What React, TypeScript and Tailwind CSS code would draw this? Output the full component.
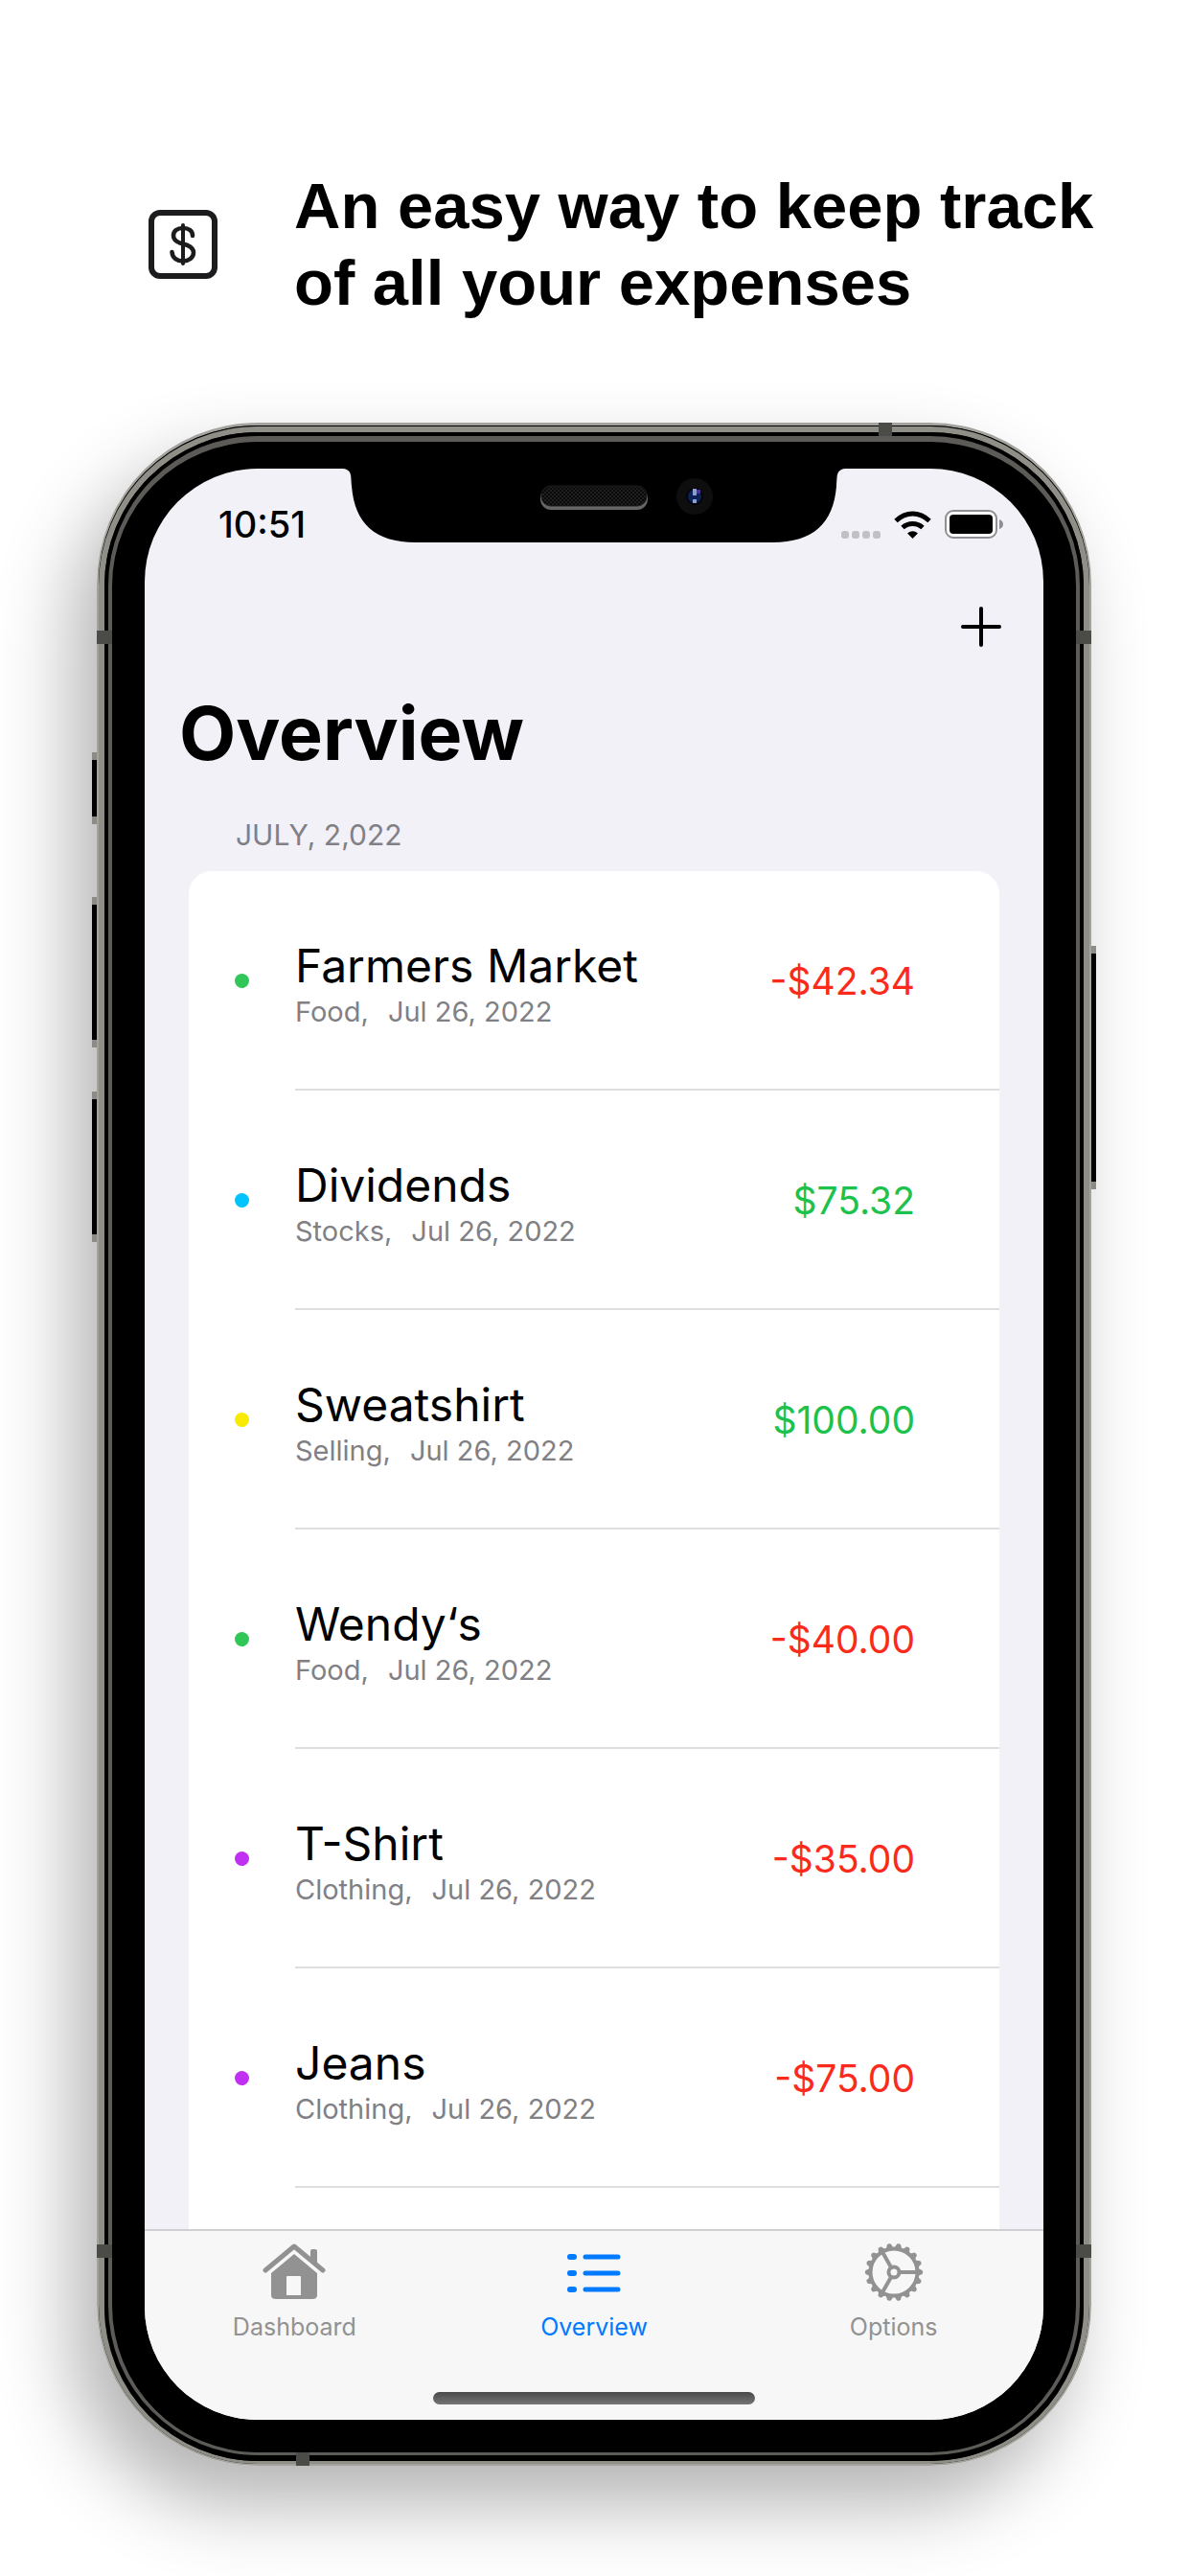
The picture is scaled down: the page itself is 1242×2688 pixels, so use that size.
import type { ReactNode } from 'react';

const transactions = [
  { title: 'Farmers Market', category: 'Food', amount: '-$42.34', dot: 'bg-[#30c758]' },
  { title: 'Dividends', category: 'Stocks', amount: '$75.32', dot: 'bg-[#00c4fb]' },
  { title: 'Sweatshirt', category: 'Selling', amount: '$100.00', dot: 'bg-[#f8ea00]' },
  { title: 'Wendy‘s', category: 'Food', amount: '-$40.00', dot: 'bg-[#30c758]' },
  { title: 'T-Shirt', category: 'Clothing', amount: '-$35.00', dot: 'bg-[#bf30f2]' },
  { title: 'Jeans', category: 'Clothing', amount: '-$75.00', dot: 'bg-[#bf30f2]' },
];

const gearAngles = Array.from({ length: 18 }, (_, i) => i * 20);

function DollarLogo() {
  return (
    <svg viewBox="0 0 72 72" className="size-[72px] shrink-0" fill="none" stroke="#1c1c1e" aria-hidden="true">
      <rect x="3" y="3" width="66" height="66" rx="9" strokeWidth="6" />
      <path d="M46 27c0-5-4-8-10-8s-10 3-10 8 4 7 10 8.500 11 3.500 11 9-5 9-11 9-11-3-11.500-9.500" strokeWidth="4.500" strokeLinecap="round" />
      <path d="M36 16v40" strokeWidth="4" strokeLinecap="round" />
    </svg>
  );
}

function HouseIcon() {
  return (
    <svg viewBox="0 0 66 60" className="h-[60px] w-[66px]" aria-hidden="true">
      <path d="M3 28 33 3 63 28" fill="none" stroke="#929292" strokeWidth="5" strokeLinecap="round" strokeLinejoin="round" />
      <path d="M50 16V8q0-2 2-2h3q2 0 2 2v14z" fill="#929292" />
      <path fillRule="evenodd" fill="#929292" d="M33 11 57 31v23q0 4-5 4H14q-5 0-5-4V31zM26 34q-1 0-1 1v19h15V35q0-1-1-1z" />
    </svg>
  );
}

function ListIcon() {
  return (
    <svg viewBox="0 0 56 60" className="h-[60px] w-14" fill="none" stroke="#007aff" strokeLinecap="round" aria-hidden="true">
      <path d="M3 14h4M3 31h4M3 48h4" strokeWidth="6" />
      <path d="M19 14h34M19 31h34M19 48h34" strokeWidth="5" />
    </svg>
  );
}

function GearIcon() {
  return (
    <svg viewBox="-31 -31 62 62" className="h-[62px] w-[62px]" aria-hidden="true">
      <g fill="none" stroke="#929292">
        <circle r="24.500" strokeWidth="4" />
        <circle r="5.500" strokeWidth="4" />
        <path d="M7 0H24M-3.500 6-12 21M-3.500-6-12-21" strokeWidth="4" />
      </g>
      {gearAngles.map((angle) => (
        <path key={angle} d="M25-4 29.500-2Q31 0 29.500 2L25 4z" fill="#929292" transform={`rotate(${angle})`} />
      ))}
    </svg>
  );
}

function WifiIcon() {
  return (
    <svg viewBox="0 0 39 29" className="h-[29px] w-[39px]" aria-hidden="true">
      <g fill="none" stroke="#000" strokeWidth="5">
        <path d="M2 10.500Q10 3 19.500 3T37 10.500" />
        <path d="M9 17.500Q13.500 13.500 19.500 13.500T30 17.500" />
      </g>
      <path d="M14 23.500Q19.500 19 25 23.500L19.500 29z" />
    </svg>
  );
}

function BatteryIcon() {
  return (
    <svg viewBox="0 0 61 30" className="h-[30px] w-[61px]" aria-hidden="true">
      <rect x="1" y="1" width="53" height="28" rx="8" fill="#fff" stroke="#8e8e93" strokeWidth="2" />
      <rect x="5" y="5" width="45" height="20" rx="4" />
      <path d="M57 10q4 1.500 4 5t-4 5z" fill="#8e8e93" />
    </svg>
  );
}

function Notch() {
  return (
    <div className="absolute inset-x-0 top-0 flex justify-center">
      <svg viewBox="0 0 528 78" className="h-[78px] w-[528px]" aria-hidden="true">
        <defs>
          <pattern id="mesh" width="4" height="4" patternUnits="userSpaceOnUse">
            <path d="M0 0h2v2H0zM2 2h2v2H2z" fill="#202020" />
          </pattern>
        </defs>
        <path d="M0 0H528C516 0 518 8 517 18 514 56 494 77 450 77H78C34 77 14 56 11 18 10 8 12 0 0 0z" />
        <rect x="208" y="20" width="112" height="23" rx="11" fill="#666" />
        <rect x="209" y="18" width="110" height="21" rx="10" fill="#090909" stroke="#222" />
        <rect x="210" y="19" width="108" height="19" rx="9" fill="url(#mesh)" />
        <circle cx="369" cy="29" r="19" fill="#0e0e0f" />
        <circle cx="369" cy="29" r="9" fill="#03040c" />
        <circle cx="369" cy="29" r="7" fill="#0c2155" />
        <path d="M369 22h6v4h-6z" fill="#4b2f9c" />
        <path d="M367 21h4v7h-4zM367 32h4v4h-4z" fill="#8a9fd0" />
      </svg>
    </div>
  );
}

function SideButton({ place }: { place: string }) {
  return <div className={`absolute w-[5px] border-y-8 border-[#8c8b86] bg-black ${place}`} />;
}

function Band({ place }: { place: string }) {
  return <div className={`absolute bg-[#4b4b48] ${place}`} />;
}

function Tab({ label, active, children }: { label: string; active?: boolean; children: ReactNode }) {
  return (
    <button
      type="button"
      className={`flex flex-1 flex-col items-center text-[25px] leading-[32px] ${active ? 'text-[#007aff]' : 'text-[#929292]'}`}
    >
      <span className="flex h-[64px] items-center">{children}</span>
      <span className="mt-[9px]">{label}</span>
    </button>
  );
}

export default function App() {
  return (
    <main className="overflow-hidden bg-white pb-[115px] font-['Inter',sans-serif] text-black">
      <header className="flex items-center gap-20 pt-[175px] pl-[155px]">
        <DollarLogo />
        <h1 className="font-['Liberation_Sans',Arial,sans-serif] text-[67px] leading-[80px] font-bold">
          An easy way to keep track
          <br />
          of all your expenses
        </h1>
      </header>

      <section className="relative mt-[106px] mr-[103px] ml-[101px] rounded-[168px] shadow-[-24px_40px_80px_rgba(0,0,0,0.3)]">
        <SideButton place="top-[344px] -left-[5px] h-[75px]" />
        <SideButton place="top-[495px] -left-[5px] h-[157px]" />
        <SideButton place="top-[698px] -left-[5px] h-[157px]" />
        <SideButton place="top-[546px] -right-[5px] h-[254px]" />

        <div className="rounded-[168px] border-x-2 border-t-3 border-b-2 border-[#a3a29d] bg-black">
          <div className="rounded-[166px] border-t border-black">
            <div className="rounded-[166px] border-x-6 border-t-6 border-b-3 border-[#8f8e87] bg-black">
              <div className="rounded-[160px] border-x-4 border-t-4 border-b-6 border-black">
                <div className="rounded-[156px] border-x-4 border-t-6 border-b-3 border-[#5c5b57] bg-black px-[34px] pt-7 pb-[34px]">
                  <div className="relative flex flex-col overflow-hidden rounded-[118px] bg-[#f2f1f7]">
                    <Notch />
                    <div className="flex h-[92px] items-end justify-between pr-[42px] pl-[77px]">
                      <span className="text-[38px] leading-[68px] font-medium">10:51</span>
                      <span className="flex items-center gap-[14px] pb-[19px]">
                        <span className="flex gap-[3px] pt-[21px]">
                          <i className="size-2 rounded-[3px] bg-[#c1c0c5]" />
                          <i className="size-2 rounded-[3px] bg-[#c1c0c5]" />
                          <i className="size-2 rounded-[3px] bg-[#c1c0c5]" />
                          <i className="size-2 rounded-[3px] bg-[#c1c0c5]" />
                        </span>
                        <WifiIcon />
                        <BatteryIcon />
                      </span>
                    </div>

                    <div className="flex justify-end pt-[52px] pr-[44px]">
                      <button type="button" aria-label="Add transaction">
                        <svg viewBox="0 0 42 42" className="size-[42px]" stroke="#000" strokeWidth="4" strokeLinecap="round" aria-hidden="true">
                          <path d="M21 2v38M2 21h38" />
                        </svg>
                      </button>
                    </div>

                    <h2 className="pt-[40px] pl-[36px] text-[77px] leading-[100px] font-bold">Overview</h2>
                    <h3 className="pt-[36px] pl-[95px] text-[30px] leading-[40px] text-[#808085]">JULY, 2,022</h3>

                    <ul className="mx-[46px] mt-[18px] h-[1417px] overflow-hidden rounded-t-3xl bg-white">
                      {transactions.map((t) => (
                        <li key={t.title} className="flex h-[229px] pl-12">
                          <span className={`mt-[107px] size-[15px] shrink-0 rounded-full ${t.dot}`} />
                          <div className="ml-12 flex flex-1 items-center justify-between border-b-2 border-[#dedee0] pt-[2px] pr-[88px]">
                            <div className="pt-1">
                              <div className="text-[48px] leading-[60px]">{t.title}</div>
                              <div className="flex gap-5 text-[29px] leading-[36px] text-[#808085]">
                                <span>{t.category},</span>
                                <span>Jul 26, 2022</span>
                              </div>
                            </div>
                            <div className={`text-[39px] leading-[48px] ${t.amount.startsWith('-') ? 'text-[#fb2a1c]' : 'text-[#1cc24b]'}`}>
                              {t.amount}
                            </div>
                          </div>
                        </li>
                      ))}
                    </ul>

                    <nav className="border-t-2 border-[#d0d0d2] bg-[#f7f7f7] pt-[11px] pb-4">
                      <div className="flex">
                        <Tab label="Dashboard">
                          <HouseIcon />
                        </Tab>
                        <Tab label="Overview" active>
                          <ListIcon />
                        </Tab>
                        <Tab label="Options">
                          <GearIcon />
                        </Tab>
                      </div>
                      <div className="mx-auto mt-[52px] h-[13px] w-[336px] rounded-full bg-linear-to-b from-[#4a4a4a] to-[#757575]" />
                    </nav>
                  </div>
                </div>
              </div>
            </div>
          </div>
        </div>

        <Band place="top-[217px] left-0 h-[14px] w-4" />
        <Band place="top-[217px] right-0 h-[14px] w-4" />
        <Band place="bottom-[217px] left-0 h-[14px] w-4" />
        <Band place="right-0 bottom-[217px] h-[14px] w-4" />
        <Band place="top-0 right-[208px] h-[14px] w-[14px]" />
        <Band place="bottom-0 left-[208px] h-[14px] w-[14px]" />
      </section>
    </main>
  );
}
